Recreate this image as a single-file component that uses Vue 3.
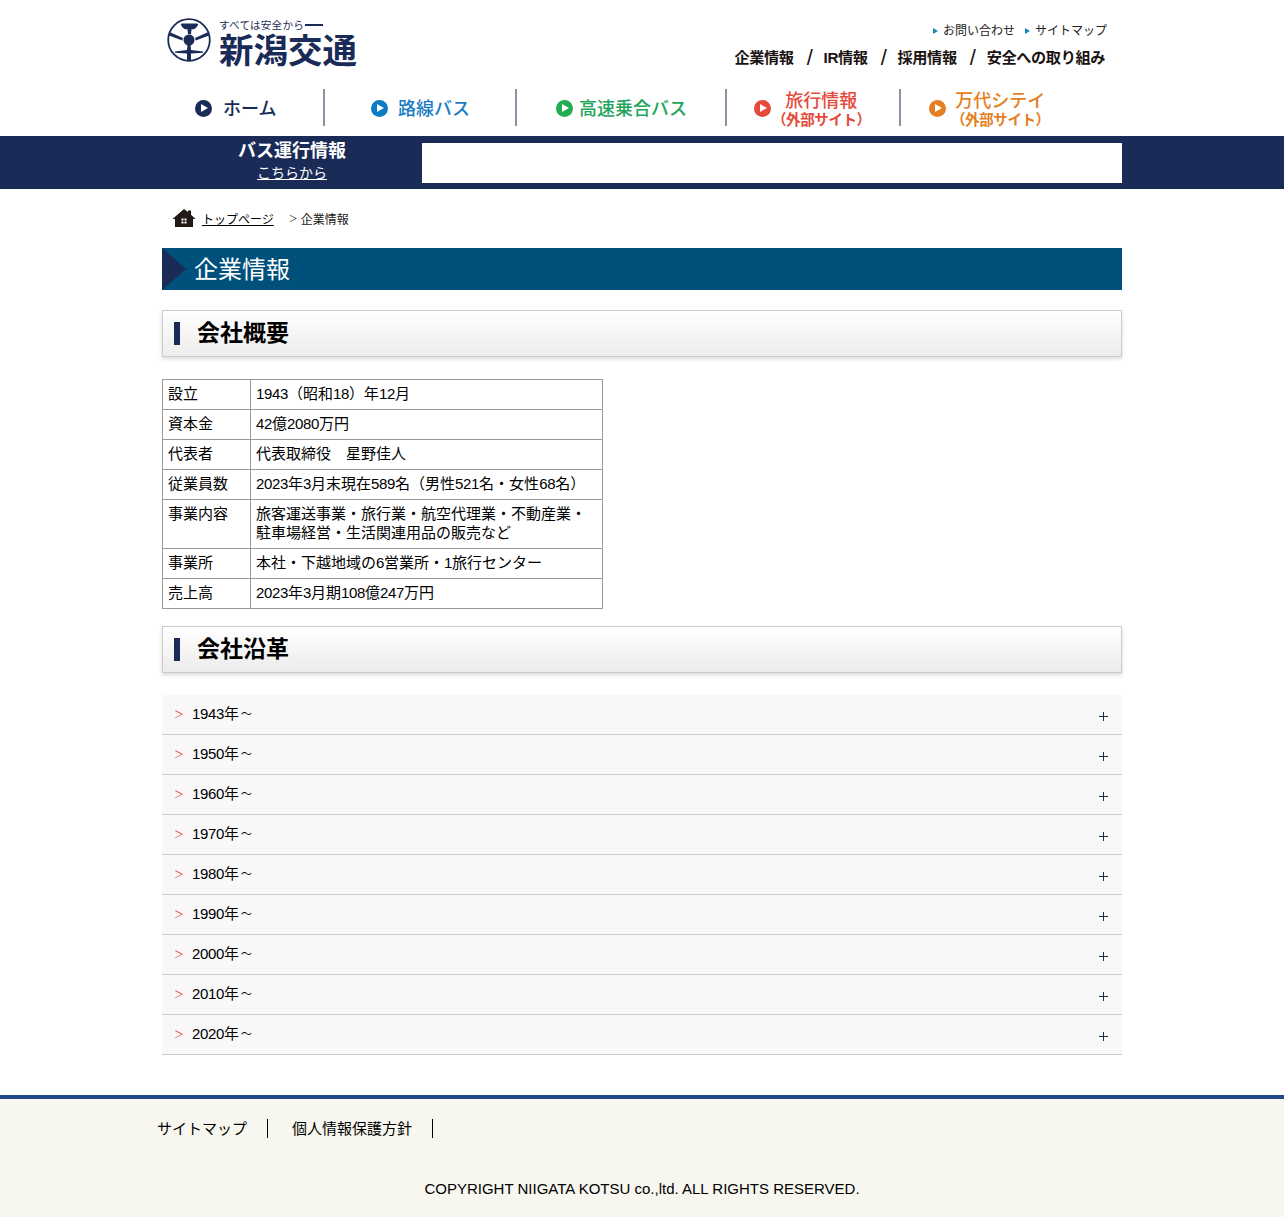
<script setup>
const topLinks = ['お問い合わせ', 'サイトマップ']
const subLinks = ['企業情報', 'IR情報', '採用情報', '安全への取り組み']
const rows = [
  ['設立', '1943（昭和18）年12月'],
  ['資本金', '42億2080万円'],
  ['代表者', '代表取締役　星野佳人'],
  ['従業員数', '2023年3月末現在589名（男性521名・女性68名）'],
  ['事業内容', '旅客運送事業・旅行業・航空代理業・不動産業・\n駐車場経営・生活関連用品の販売など'],
  ['事業所', '本社・下越地域の6営業所・1旅行センター'],
  ['売上高', '2023年3月期108億247万円'],
]
const years = ['1943', '1950', '1960', '1970', '1980', '1990', '2000', '2010', '2020']
const parts = (s) => s.split(/(\d+)/).filter(Boolean)
const isNum = (s) => /^\d+$/.test(s)
</script>

<template>
  <div class="page">
    <header class="header">
      <div class="masthead">
        <a class="logo">
          <svg class="logo-mark" width="46" height="46" viewBox="0 0 46 46">
            <circle cx="23" cy="23" r="20.8" fill="none" stroke="#1a2b57" stroke-width="1.8" />
            <path d="M15 6.500h16c1 0 1.400 1 .8 2l-2 2.500c-.8 1-2 1.300-3.300 1.300h-1l-.5 5h-3l-.5-5h-1c-1.300 0-2.500-.3-3.300-1.300l-2-2.500c-.6-1-.2-2 .8-2z" fill="#1a2b57" />
            <path d="M3.500 15L17 21l-.8 2.500L3 18.500zM42.500 15L29 21l.8 2.500L43 18.500z" fill="#1a2b57" />
            <circle cx="23" cy="23" r="5.500" fill="#1a2b57" />
            <path d="M21.500 28h3l.5 5 12 1.500v1.200l-12 .8V44h-4v-7.500l-12-.8v-1.200l12-1.500z" fill="#1a2b57" />
          </svg>
          <div class="logo-text">
            <div class="tagline"><span>すべては安全から</span><i></i></div>
            <div class="brand">新潟交通</div>
          </div>
        </a>
        <div class="util">
          <ul class="top-links">
            <li v-for="t in topLinks" :key="t"><span class="tri"></span>{{ t }}</li>
          </ul>
          <ul class="sub-links">
            <template v-for="(t, i) in subLinks" :key="t">
              <li v-if="i" class="slash">/</li>
              <li>{{ t }}</li>
            </template>
          </ul>
        </div>
      </div>
      <nav class="gnav">
        <a class="gn gn-home"><span class="dot navy"></span><b class="navy-t">ホーム</b></a>
        <a class="gn gn-route"><span class="dot blue"></span><b class="blue-t">路線バス</b></a>
        <a class="gn gn-exp"><span class="dot green"></span><b class="green-t">高速乗合バス</b></a>
        <a class="gn gn-trip"><span class="dot red"></span><b class="red-t two">旅行情報<small>（外部サイト）</small></b></a>
        <a class="gn gn-city"><span class="dot orange"></span><b class="orange-t two">万代シテイ<small>（外部サイト）</small></b></a>
      </nav>
    </header>

    <div class="notice">
      <div class="notice-in">
        <div class="notice-label">
          <strong>バス運行情報</strong>
          <a>こちらから</a>
        </div>
        <div class="notice-box"></div>
      </div>
    </div>

    <main class="main">
      <div class="crumb">
        <svg width="24" height="20" viewBox="0 0 24 20">
          <path d="M12 1l4 3V2.500h3v4.300L23.500 11H21v8H3v-8H.5z" fill="#231815" />
          <path d="M9.500 10.500h2v2h-2zM12.500 10.500h2v2h-2zM9.500 13.500h2v2h-2zM12.500 13.500h2v2h-2z" fill="#fff" />
        </svg>
        <a>トップページ</a><span class="sep">＞</span><span>企業情報</span>
      </div>

      <h1 class="title">企業情報</h1>

      <h2 class="sec">会社概要</h2>
      <table class="info">
        <tbody>
          <tr v-for="r in rows" :key="r[0]">
            <th>{{ r[0] }}</th>
            <td><span v-for="(p, i) in parts(r[1])" :key="i" :class="{ num: isNum(p) }">{{ p }}</span></td>
          </tr>
        </tbody>
      </table>

      <h2 class="sec second">会社沿革</h2>
      <ul class="acc">
        <li v-for="y in years" :key="y">
          <span class="gt">＞</span>
          <span class="yr"><span class="num">{{ y }}</span>年<span class="wave">～</span></span>
          <span class="plus"></span>
        </li>
      </ul>
    </main>

    <footer class="footer">
      <ul class="f-links">
        <li>サイトマップ</li>
        <li>個人情報保護方針</li>
      </ul>
      <p class="copy">COPYRIGHT NIIGATA KOTSU co.,ltd. ALL RIGHTS RESERVED.</p>
    </footer>
  </div>
</template>

<style scoped>
.page {
  font-family: "Liberation Sans", "Noto Sans CJK JP", sans-serif;
  font-size: 15px;
  color: #000;
  background: #fff;
  height: 1217px;
  overflow: hidden;
}
ul { list-style: none; margin: 0; padding: 0; }
.num { letter-spacing: -.34px; }
.header { width: 960px; margin: 0 auto; height: 136px; }
.masthead { display: flex; justify-content: space-between; height: 88px; }
.logo { display: flex; padding: 17px 0 0 4px; color: #1a2b57; }
.logo-mark { flex: none; }
.logo-text { margin-left: 7px; }
.tagline { display: flex; align-items: center; font-size: 10.600px; letter-spacing: .2px; line-height: 14px; padding-top: 1px; color: #1a2b57; }
.tagline i { display: block; width: 18px; height: 2px; background: #1a2b57; margin-left: 1px; }
.brand { font-size: 34.500px; font-weight: 700; line-height: 34px; white-space: nowrap; margin-top: 2px; }
.util { display: flex; flex-direction: column; align-items: flex-end; padding: 22px 15px 0 0; }
.top-links { display: flex; gap: 10px; font-size: 12px; line-height: 18px; color: #222; }
.top-links li { display: flex; align-items: center; }
.tri { width: 0; height: 0; border-left: 5px solid #1c86b8; border-top: 3px solid transparent; border-bottom: 3px solid transparent; margin-right: 5px; }
.sub-links { display: flex; margin-top: 8px; margin-right: 2px; font-size: 15.200px; font-weight: 700; line-height: 20px; color: #1a1311; letter-spacing: -.4px; }
.slash { font-size: 22px; font-weight: 400; width: 30px; text-align: center; padding-left: 2px; box-sizing: border-box; }

.gnav { display: flex; height: 37px; margin-top: 1px; }
.gn { display: flex; align-items: center; box-sizing: border-box; border-right: 2px solid #8c94a3; }
.gn:last-child { border-right: 0; }
.gn b { font-weight: 500; font-size: 18px; line-height: 22px; margin-top: 2px; white-space: nowrap; }
.gn-home { width: 163px; padding-left: 33px; }
.gn-route { width: 192px; padding-left: 46px; }
.gn-exp { width: 210px; padding-left: 39px; }
.gn-trip { width: 174px; padding-left: 27px; }
.gn-city { width: 221px; padding-left: 28px; }
.gn-home b { margin-left: 11px; }
.gn-route b { margin-left: 10px; }
.gn-exp b { margin-left: 6px; }
.gn-trip b { margin-left: 1px; }
.gn-city b { margin-left: 5px; }
.dot { flex: none; width: 17px; height: 17px; margin-top: 1px; border-radius: 50%; position: relative; }
.dot::after { content: ""; position: absolute; left: 6px; top: 4.500px; border-left: 7px solid #fff; border-top: 4px solid transparent; border-bottom: 4px solid transparent; }
.navy { background: #1a2b57; }
.blue { background: #0a7cc4; }
.green { background: #22ac54; }
.red { background: #e5493a; }
.orange { background: #e67e22; }
.navy-t { color: #1a2b57; }
.blue-t { color: #1a7cc4; }
.green-t { color: #22a45c; }
.red-t { color: #e5493a; }
.orange-t { color: #e67e22; }
.gn .two { display: flex; flex-direction: column; align-items: center; line-height: 20px; margin-top: 6px; }
.two small { font-size: 14.500px; font-weight: 700; line-height: 19px; letter-spacing: -.4px; }

.notice { height: 53px; background: #1a2b57; }
.notice-in { width: 960px; height: 100%; margin: 0 auto; display: flex; }
.notice-label { width: 260px; display: flex; flex-direction: column; align-items: center; color: #fff; }
.notice-label strong { font-size: 18px; line-height: 20px; margin-top: 5px; }
.notice-label a { font-size: 14px; line-height: 18px; margin-top: 3px; text-decoration: underline; }
.notice-box { width: 700px; height: 40px; margin-top: 7px; background: #fff; }

.main { width: 960px; margin: 0 auto; }
.crumb { height: 59px; display: flex; align-items: center; padding: 0 0 1px 10px; box-sizing: border-box; font-size: 12px; color: #231815; }
.crumb a { margin-left: 6px; text-decoration: underline; color: #000; }
.crumb .sep { font-size: 9px; margin-left: 14px; margin-right: 2px; width: 11px; text-align: center; }
.title {
  position: relative;
  height: 42px;
  margin: 0;
  padding-left: 32px;
  background: #00507c;
  color: #fff;
  font-size: 24px;
  font-weight: 400;
  line-height: 43px;
  overflow: hidden;
}
.title::before { content: ""; position: absolute; left: 0; top: 0; border-left: 24px solid #1a2b57; border-top: 21px solid transparent; border-bottom: 21px solid transparent; }
.sec {
  position: relative;
  box-sizing: border-box;
  height: 47px;
  margin: 20px 0 22px;
  padding-left: 34px;
  border: 1px solid #ccc;
  background: linear-gradient(#fff, #ececec);
  box-shadow: 0 2px 4px rgba(0, 0, 0, .15);
  font-size: 23px;
  font-weight: 700;
  line-height: 44px;
}
.sec::before { content: ""; position: absolute; left: 11px; top: 11px; width: 6px; height: 23px; background: #1a2b57; }
.sec.second { margin-top: 17px; }
.info { border-collapse: collapse; width: 441px; }
.info th, .info td { border: 1px solid #999; padding: 4px 5px 6px; font-size: 15px; line-height: 19px; font-weight: 400; text-align: left; vertical-align: top; white-space: pre-line; }
.info th { width: 77px; }
.acc li { position: relative; display: flex; align-items: center; height: 40px; box-sizing: border-box; background: #f8f8f8; border-bottom: 1px solid #ccc; padding-bottom: 5px; }
.gt { width: 30px; padding: 2px 0 0 12px; box-sizing: border-box; font-size: 10px; color: #e5493a; }
.yr { font-size: 15px; }
.wave { display: inline-block; width: 15px; text-align: center; font-size: 11px; vertical-align: 1px; }
.plus { position: absolute; right: 14px; top: 17px; width: 9px; height: 9px; background: linear-gradient(#1a2b57, #1a2b57) center / 100% 1px no-repeat, linear-gradient(#1a2b57, #1a2b57) center / 1px 100% no-repeat; }

.footer { margin-top: 40px; height: 122px; border-top: 4px solid #1f4a8a; background: #f7f7f0; box-sizing: border-box; }
.f-links { display: flex; width: 970px; margin: 0 auto; padding-top: 20px; }
.f-links li { height: 19px; line-height: 19px; padding-right: 20px; margin-right: 24px; border-right: 1px solid #000; font-size: 15px; }
.copy { margin: 41px 0 0; text-align: center; font-size: 15px; line-height: 20px; }
</style>
